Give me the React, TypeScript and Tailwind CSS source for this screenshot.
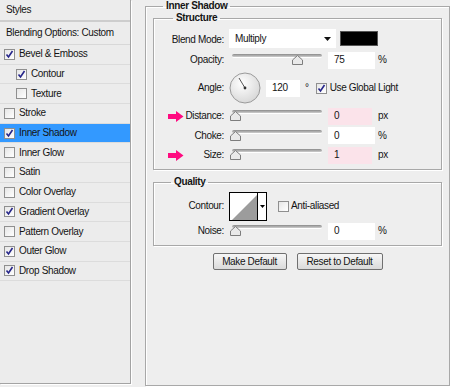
import React from "react"

const styles = [
    { name: "Bevel & Emboss", on: true },
    { name: "Contour", on: true, sub: true },
    { name: "Texture", on: false, sub: true },
    { name: "Stroke", on: false },
    { name: "Inner Shadow", on: true, active: true },
    { name: "Inner Glow", on: false },
    { name: "Satin", on: false },
    { name: "Color Overlay", on: false },
    { name: "Gradient Overlay", on: true },
    { name: "Pattern Overlay", on: false },
    { name: "Outer Glow", on: true },
    { name: "Drop Shadow", on: true },
]

function Check({ on }: { on: boolean }) {
    return (
        <span className="w-[11px] h-[11px] border border-[#8f8f8f] bg-gradient-to-br from-[#e6e6e6] to-white flex items-center justify-center shrink-0">
            {on && (
                <svg width="9" height="9" viewBox="0 0 9 9">
                    <path d="M1.5 4.5 L3.5 7 L7.5 1" fill="none" stroke="#26268a" strokeWidth="1.6" />
                </svg>
            )}
        </span>
    )
}

function PinkArrow() {
    return (
        <svg width="16" height="11" viewBox="0 0 16 11">
            <polygon points="0,3 8,3 8,0 15.5,5.5 8,11 8,8 0,8" fill="#ff0a80" />
        </svg>
    )
}

// slider with the little house-shaped thumb
function Slider({ value }: { value: number }) {
    return (
        <div className="relative w-[92px] h-[13px] self-start mt-[4px] ml-[1px] shrink-0">
            <div className="absolute left-[2px] right-0 top-0 h-[4px] rounded-full bg-gradient-to-b from-[#8a8a8a] to-[#cfcfcf] border-b border-white" />
            <div className="absolute top-[1px] w-[11px] h-[10px]" style={{ left: `${value * 0.88}px` }}>
                <svg width="11" height="10" viewBox="0 0 11 10">
                    <polygon points="5.5,0.5 10.5,5 10.5,9.5 0.5,9.5 0.5,5" fill="#e9e9e9" stroke="#7d7d7d" />
                </svg>
            </div>
        </div>
    )
}

function NumBox({ value, pink, unit, w = "w-[47px]" }: { value: string; pink?: boolean; unit: string; w?: string }) {
    return (
        <>
            <div className={`${w} h-[17px] ml-[6px] flex items-center pl-[6px] ${pink ? "bg-[#fbe3ea]" : "bg-white"}`}>
                {value}
            </div>
            <span className={pink ? "ml-[6px]" : "ml-[3px]"}>{unit}</span>
        </>
    )
}

function Row({ label, h, arrow, children }: { label: string; h: string; arrow?: boolean; children: React.ReactNode }) {
    return (
        <div className={`flex items-center ${h}`}>
            <div className="w-[70px] flex items-center pl-[14px]">
                {arrow && <PinkArrow />}
                <span className="ml-auto">{label}</span>
            </div>
            <div className="flex-1 flex items-center pl-[5px] h-full">{children}</div>
        </div>
    )
}

const box = "border border-[#a8a8a8] shadow-[inset_1px_1px_0_#ffffff,1px_1px_0_#ffffff]"

export default function App() {
    return (
        <div className="w-[450px] h-[387px] bg-[#eeeeee] flex font-[Liberation_Sans,Arial,sans-serif] text-[10px] tracking-[-0.35px] text-[#141414] leading-[12px] overflow-hidden">
            <div className="w-[131px] h-[384px] bg-[#ececec] border-r border-b border-[#a3a3a3] shadow-[1px_1px_0_#ffffff] flex flex-col">
                <div className="h-[22px] flex items-center pl-[6px] border-b-2 border-[#cdcdcd]">Styles</div>
                <div className="h-[23px] flex items-center pl-[6px] border-b border-[#d8d8d8]">Blending Options: Custom</div>
                {styles.map((s) => (
                    <div
                        key={s.name}
                        className={`h-[19.7px] flex items-center gap-[4px] border-b border-[#dcdcdc] ${s.sub ? "pl-[16px]" : "pl-[4px]"} ${s.active ? "bg-[#3399ff]" : ""}`}
                    >
                        <Check on={s.on} />
                        <span>{s.name}</span>
                    </div>
                ))}
            </div>

            <fieldset className={`ml-[14px] w-[305px] h-[386px] px-[7px] ${box}`}>
                <legend className="ml-[10px] px-[3px] font-bold">Inner Shadow</legend>

                <fieldset className={`w-[289px] pt-[5px] pb-[4px] ${box}`}>
                    <legend className="ml-[19px] px-[3px] font-bold">Structure</legend>
                    <Row label="Blend Mode:" h="h-[21px]">
                        <div className="w-[107px] h-[19px] bg-white flex items-center pl-[6px] self-start">
                            Multiply
                            <svg className="ml-auto mr-[5px]" width="7" height="4" viewBox="0 0 7 4">
                                <polygon points="0,0 7,0 3.5,4" fill="#111" />
                            </svg>
                        </div>
                        <div className="ml-[4px] w-[38px] h-[15px] bg-black border border-[#555] self-start mt-[2px]" />
                    </Row>
                    <Row label="Opacity:" h="h-[20px]">
                        <Slider value={71} />
                        <NumBox value="75" unit="%" />
                    </Row>
                    <Row label="Angle:" h="h-[36px]">
                        <svg width="32" height="32" viewBox="0 0 32 32">
                            <defs>
                                <radialGradient id="dial" cx="40%" cy="35%" r="70%">
                                    <stop offset="0%" stopColor="#ffffff" />
                                    <stop offset="100%" stopColor="#d6d6d6" />
                                </radialGradient>
                            </defs>
                            <circle cx="16" cy="16" r="15" fill="url(#dial)" stroke="#9a9a9a" />
                            <line x1="16" y1="16" x2="10" y2="6" stroke="#555" strokeWidth="1" />
                            <circle cx="16" cy="16" r="1.4" fill="#333" />
                        </svg>
                        <div className="ml-[5px] w-[34px] h-[17px] bg-white flex items-center pl-[6px]">120</div>
                        <span className="ml-[5px]">°</span>
                        <span className="ml-[7px]">
                            <Check on={true} />
                        </span>
                        <span className="ml-[3px]">Use Global Light</span>
                    </Row>
                    <Row label="Distance:" h="h-[20px]" arrow>
                        <Slider value={0} />
                        <NumBox value="0" unit="px" pink w="w-[44px]" />
                    </Row>
                    <Row label="Choke:" h="h-[19px]">
                        <Slider value={0} />
                        <NumBox value="0" unit="%" />
                    </Row>
                    <Row label="Size:" h="h-[20px]" arrow>
                        <Slider value={0} />
                        <NumBox value="1" unit="px" pink w="w-[44px]" />
                    </Row>
                </fieldset>

                <fieldset className={`mt-[6px] w-[289px] pt-[3px] pb-[4px] ${box}`}>
                    <legend className="ml-[17px] px-[3px] font-bold">Quality</legend>
                    <Row label="Contour:" h="h-[30px]">
                        <div className="w-[38px] h-[29px] border border-black bg-white flex">
                            <svg width="27" height="27" viewBox="0 0 27 27">
                                <polygon points="2,27 27,2 27,27" fill="#9c9c9c" />
                            </svg>
                            <div className="flex-1 border-l border-black flex items-center justify-center">
                                <svg width="5" height="3" viewBox="0 0 5 3">
                                    <polygon points="0,0 5,0 2.5,3" fill="#000" />
                                </svg>
                            </div>
                        </div>
                        <span className="ml-[11px]">
                            <Check on={false} />
                        </span>
                        <span className="ml-[2px]">Anti-aliased</span>
                    </Row>
                    <Row label="Noise:" h="h-[20px]">
                        <Slider value={0} />
                        <NumBox value="0" unit="%" />
                    </Row>
                </fieldset>

                <div className="mt-[7px] flex justify-center gap-[10px]">
                    <button className="w-[74px] h-[17px] rounded-[2px] border border-[#707070] bg-gradient-to-b from-[#f7f7f7] to-[#dadada]">
                        Make Default
                    </button>
                    <button className="w-[86px] h-[17px] rounded-[2px] border border-[#707070] bg-gradient-to-b from-[#f7f7f7] to-[#dadada]">
                        Reset to Default
                    </button>
                </div>
            </fieldset>
        </div>
    )
}
